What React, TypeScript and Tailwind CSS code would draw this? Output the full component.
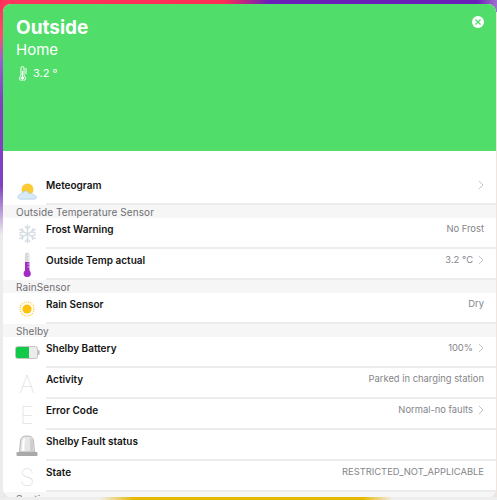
import React from "react";

const font = { fontFamily: "Inter, 'Liberation Sans', sans-serif" };

function MeteoIcon() {
  return (
    <svg width="21" height="17" viewBox="0 0 24 20">
      <circle cx="12" cy="7.500" r="7" fill="#fbcb35" />
      <path d="M4 19c-2.200 0-3.400-1.300-3.400-2.800 0-1.600 1.300-2.800 3-2.800.6-1.700 2-2.600 3.600-2.300 1-1.700 3.400-2.100 5-1 1 .7 1.500 1.600 1.600 2.600 1-.8 3-.8 4 0 .8.500 1.200 1.200 1.400 1.800 2 0 3.300 1.100 3.300 2.400 0 1.300-1.200 2.100-3 2.100z" fill="#d8e9f7" stroke="#a9cdea" strokeWidth="0.8" />
    </svg>
  );
}

function SnowIcon() {
  return (
    <svg width="19" height="22" viewBox="0 0 20 21" fill="none" stroke="#d5dee4" strokeWidth="1.500" strokeLinecap="round">
      <path d="M10 1v19M1.800 5.700l16.400 9.600M18.200 5.700L1.800 15.300" />
      <path d="M7.500 2.500L10 5l2.500-2.500M7.500 18.500L10 16l2.500 2.500M2 9.500l3.400-1L4.400 5M15.600 16l-1-3.500 3.400-1M2 11.500l3.400 1L4.400 16M15.600 5l-1 3.500 3.400 1" />
    </svg>
  );
}

function ThermoIcon() {
  return (
    <svg width="10" height="26" viewBox="0 0 10 26">
      <rect x="3" y="0.500" width="4.400" height="20" rx="2" fill="#d9d9d9" />
      <rect x="3" y="10" width="4.400" height="11" fill="#a32cc4" />
      <circle cx="5.200" cy="21.500" r="3.600" fill="#a32cc4" />
      <path d="M5.500 3h2M5.500 6h2M5.500 9h2M5.500 12h2M5.500 15h2" stroke="#ffffff" strokeWidth="0.7" />
    </svg>
  );
}

function SunIcon() {
  return (
    <svg width="16" height="16" viewBox="0 0 16 16">
      <circle cx="8" cy="8" r="4.600" fill="#fdc10d" />
      <g stroke="#fdc10d" strokeWidth="1.100" strokeDasharray="1 1.100" fill="none">
        <circle cx="8" cy="8" r="7" />
      </g>
    </svg>
  );
}

function BatteryIcon() {
  return (
    <svg width="25" height="13" viewBox="0 0 25 13">
      <rect x="0.500" y="0.500" width="22" height="12" rx="2" fill="#ececec" stroke="#c4c4c4" />
      <path d="M1 2.500a1.500 1.500 0 0 1 1.500-1.500H14v11H2.500A1.500 1.500 0 0 1 1 10.500z" fill="#13c94a" />
      <rect x="23" y="4" width="1.600" height="5" rx="0.800" fill="#bdbdbd" />
    </svg>
  );
}

function BeaconIcon() {
  return (
    <svg width="22" height="22" viewBox="0 0 22 22">
      <path d="M3.500 17 4.500 6C4.800 2.500 6.500 1 11 1s6.200 1.500 6.500 5l1 11z" fill="#e6e6e6" stroke="#a8a8a8" strokeWidth="0.8" />
      <path d="M8 3.500C6.500 5 6.500 8 6 16h2.500C8.500 9 8.500 6 9.500 3.500z" fill="#ffffff" />
      <path d="M14 3v13h3.500L17 8c0-2.500-1-4-3-5z" fill="#cfcfcf" />
      <rect x="0.500" y="17" width="21" height="4" rx="1" fill="#a9a9a9" />
    </svg>
  );
}

function LetterIcon({ ch }: { ch: string }) {
  return <span className="mt-[3px] text-[24px] font-thin leading-none text-[#d6d6d6]">{ch}</span>;
}

function Chevron() {
  return (
    <svg width="6" height="10" viewBox="0 0 6 10" fill="none" stroke="#c4c4c7" strokeWidth="1" className="ml-[5px] mt-[2px] shrink-0">
      <path d="M0.800 0.800L5 5 0.800 9.200" />
    </svg>
  );
}

function Row({
  icon,
  title,
  value,
  chevron,
}: {
  icon: React.ReactNode;
  title: string;
  value?: string;
  chevron?: boolean;
}) {
  return (
    <div className="flex h-[31px] shrink-0">
      <div className="flex w-[43px] shrink-0 items-center justify-center pl-[5px]">{icon}</div>
      <div className="flex min-w-0 flex-1 items-start justify-between border-b-2 border-[#ececec] pr-[12px] pt-[4px]">
        <span className="text-[10px] font-semibold leading-[14px] text-[#141414]">{title}</span>
        <span className="flex items-start text-[9.4px] leading-[14px] text-[#85858a]">
          {value}
          {chevron && <Chevron />}
        </span>
      </div>
    </div>
  );
}

function Section({ title }: { title: string }) {
  return (
    <div className="h-[13px] shrink-0 bg-[#f6f6f6] pl-[13px] text-[10px] leading-[14px] tracking-[0.1px] text-[#6f6f73]">
      {title}
    </div>
  );
}

export default function App() {
  return (
    <div
      style={font}
      className="h-[500px] w-[497px] overflow-hidden pb-[3px] pl-[3px] pr-[1px] pt-[4px] [background:linear-gradient(180deg,#ff2d55_0,#ff4d70_35px,#9a60cc_60px,#8040c0_100px,#8040c0_185px,#ececec_235px)_0_0/3px_100%_no-repeat,linear-gradient(90deg,#ff3560_0,#ff2d55_45%,#6a20b8_54%,#6a20b8_96%,#a070d0_100%)_0_0/100%_12px_no-repeat,linear-gradient(90deg,#eeeeee_0,#eeeeee_20%,#e6b800_27%,#e6b800_73%,#eeeeee_79%)_0_100%/100%_3px_no-repeat,#f0e4de]"
    >
      <div className="flex h-full flex-col overflow-hidden rounded-[8px] bg-white">
        <div className="relative h-[147px] shrink-0 bg-[#50dd69] pl-[13px] pt-[12px] text-white">
          <div className="text-[19px] font-bold leading-[23px]">Outside</div>
          <div className="mt-[1px] text-[15px] leading-[20px]">Home</div>
          <div className="mt-[6px] flex items-center gap-[3px] text-[11px] leading-[15px]">
            <svg width="14" height="15" viewBox="0 0 14 15" fill="none" stroke="#ffffff" strokeWidth="1">
              <path d="M5 2a1.500 1.500 0 0 1 3 0v7.500a3 3 0 1 1-3 0z" />
              <circle cx="6.500" cy="12" r="1.300" fill="#ffffff" />
              <path d="M6.500 5v6M10 2v6" />
            </svg>
            <span>3.2 °</span>
          </div>
          <div className="absolute right-[12px] top-[12px] flex h-[12px] w-[12px] items-center justify-center rounded-full bg-white">
            <svg width="6" height="6" viewBox="0 0 6 6" stroke="#50dd69" strokeWidth="1.300">
              <path d="M0.500 0.500L5.500 5.500M5.500 0.500L0.500 5.500" />
            </svg>
          </div>
        </div>

        <div className="flex h-[54px] shrink-0">
          <div className="flex w-[43px] shrink-0 items-end justify-center pb-[5px] pl-[5px]">
            <MeteoIcon />
          </div>
          <div className="flex flex-1 items-start justify-between border-b-2 border-[#ececec] pr-[12px] pt-[27px]">
            <span className="text-[10px] font-semibold leading-[14px] text-[#141414]">Meteogram</span>
            <Chevron />
          </div>
        </div>

        <Section title="Outside Temperature Sensor" />
        <Row icon={<SnowIcon />} title="Frost Warning" value="No Frost" />
        <Row icon={<ThermoIcon />} title="Outside Temp actual" value="3.2 °C" chevron />
        <Section title="RainSensor" />
        <Row icon={<SunIcon />} title="Rain Sensor" value="Dry" />
        <Section title="Shelby" />
        <Row icon={<BatteryIcon />} title="Shelby Battery" value="100%" chevron />
        <Row icon={<LetterIcon ch="A" />} title="Activity" value="Parked in charging station" />
        <Row icon={<LetterIcon ch="E" />} title="Error Code" value="Normal-no faults" chevron />
        <Row icon={<BeaconIcon />} title="Shelby Fault status" />
        <Row icon={<LetterIcon ch="S" />} title="State" value="RESTRICTED_NOT_APPLICABLE" />
        <Section title="Sections" />
      </div>
    </div>
  );
}
